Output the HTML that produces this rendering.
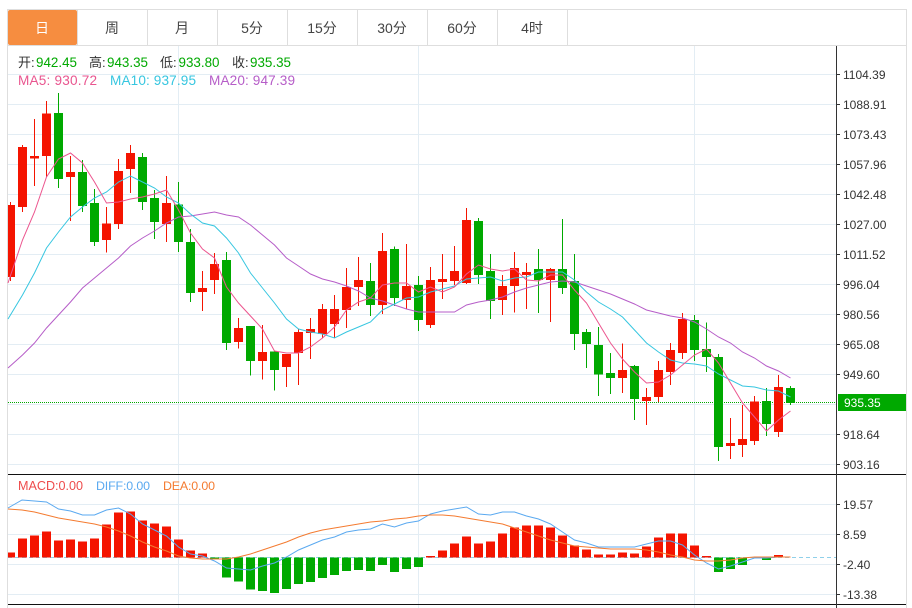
<!DOCTYPE html>
<html><head><meta charset="utf-8"><style>
html,body{margin:0;padding:0;background:#fff;width:912px;height:608px;overflow:hidden}
svg{position:absolute;left:0;top:0}
text{font-family:"Liberation Sans","Noto Sans CJK SC",sans-serif}
.t{font-size:14px;fill:#444;text-anchor:middle}
.a{font-size:12px;fill:#333}
.b{font-size:13px}
</style></head><body>
<svg width="912" height="608" viewBox="0 0 912 608">
<g shape-rendering="crispEdges">
<path d="M8 74.5H836M8 104.5H836M8 134.5H836M8 164.5H836M8 194.5H836M8 224.5H836M8 254.5H836M8 284.5H836M8 314.5H836M8 344.5H836M8 374.5H836M8 404.5H836M8 434.5H836M8 464.5H836M8 504.5H836M8 534.5H836M8 564.5H836M8 594.5H836M178.5 46V608M418.5 46V608M694.5 46V608" stroke="#e3edf4" fill="none"/>
<path d="M7.5 608V9.5H906.5V608M8 45.5H906M77.5 10V45M147.5 10V45M217.5 10V45M287.5 10V45M357.5 10V45M427.5 10V45M497.5 10V45M567.5 10V45" stroke="#dedede" fill="none"/>
</g>
<rect x="8" y="10" width="69" height="35" rx="2" fill="#f68d40"/>
<text class="t" x="42" y="33" style="fill:#fff">日</text>
<text class="t" x="112" y="33">周</text>
<text class="t" x="182" y="33">月</text>
<text class="t" x="252" y="33">5分</text>
<text class="t" x="322" y="33">15分</text>
<text class="t" x="392" y="33">30分</text>
<text class="t" x="462" y="33">60分</text>
<text class="t" x="532" y="33">4时</text>

<g class="b">
<text x="18" y="67" fill="#333" style="font-size:13px">开:</text><text x="36" y="67" fill="#00a900" style="font-size:13.4px" textLength="41">942.45</text>
<text x="89" y="67" fill="#333" style="font-size:13px">高:</text><text x="107" y="67" fill="#00a900" style="font-size:13.4px" textLength="41">943.35</text>
<text x="160" y="67" fill="#333" style="font-size:13px">低:</text><text x="178.5" y="67" fill="#00a900" style="font-size:13.4px" textLength="41">933.80</text>
<text x="232" y="67" fill="#333" style="font-size:13px">收:</text><text x="250" y="67" fill="#00a900" style="font-size:13.4px" textLength="41">935.35</text>
<text x="18" y="85" fill="#e9558f" style="font-size:13.6px" textLength="79">MA5: 930.72</text>
<text x="110" y="85" fill="#36c6e0" style="font-size:13.6px" textLength="86">MA10: 937.95</text>
<text x="209" y="85" fill="#b65dc8" style="font-size:13.6px" textLength="86">MA20: 947.39</text>
<text x="18" y="490" fill="#ee4c4c" style="font-size:12.6px" textLength="65">MACD:0.00</text>
<text x="96" y="490" fill="#5aa9f0" style="font-size:12.4px" textLength="54">DIFF:0.00</text>
<text x="163" y="490" fill="#f47b30" style="font-size:12.4px" textLength="52">DEA:0.00</text>
</g>

<!-- zero + price lines -->
<path d="M8 557.5H836" stroke="#8fd0ea" stroke-dasharray="4 3" fill="none"/>
<path d="M8 402.5H836" stroke="#00a900" stroke-dasharray="1 1" fill="none" shape-rendering="crispEdges"/>

<!-- red wicks -->
<path fill="none" stroke="#f41400" d="M10.5 202V281M22.5 145V212M34.5 119V186M46.5 101V177M70.5 156V221M106.5 207V252.5M118.5 159V229M130.5 145V193M166.5 176V242M202.5 271V311M214.5 253V294M238.5 318V348.5M262.5 325V379.5M286.5 354V387M298.5 329V385M310.5 318V359M322.5 304V338M334.5 295V338M346.5 268V328M358.5 257V306M382.5 233V314M406.5 244V309M430.5 267V328M442.5 254V299M454.5 246V285M466.5 208V284M502.5 275V315M514.5 252V312.5M526.5 263V309M550.5 268V322M622.5 343.5V393M646.5 388V425M658.5 361V402M670.5 343V385M682.5 313V359M730.5 418V459M742.5 405V457M754.5 396V445M778.5 375V437"/>
<!-- red bodies -->
<path fill="#f41400" d="M8 205H15V277H8zM18 147h9V207h-9zM30 156h9V158.5h-9zM42 113.5h9V156h-9zM66 172h9V177h-9zM102 223.5h9V240h-9zM114 171h9V224h-9zM126 153h9V169h-9zM162 203h9V224h-9zM198 288h9V292h-9zM210 264h9V280h-9zM234 328h9V342h-9zM258 352h9V361h-9zM282 354h9V367h-9zM294 332h9V353h-9zM306 329h9V333h-9zM318 309h9V334h-9zM330 309h9V324h-9zM342 287h9V310h-9zM354 280h9V287h-9zM378 251h9V305h-9zM402 286h9V300h-9zM426 280h9V325h-9zM438 279h9V282h-9zM450 271h9V281h-9zM462 220h9V283h-9zM498 286h9V300h-9zM510 268h9V286h-9zM522 272h9V275h-9zM546 269h9V280h-9zM618 370h9V378h-9zM642 397h9V401h-9zM654 370h9V397h-9zM666 350h9V372h-9zM678 319h9V353h-9zM726 443h9V446h-9zM738 439h9V445h-9zM750 401.5h9V441h-9zM774 387h9V432h-9z"/>
<!-- green wicks -->
<path fill="none" stroke="#00a900" d="M58.5 93V188M82.5 160V212M94.5 189V246M142.5 153V210M154.5 190V239M178.5 182V252M190.5 229V302M226.5 252V350M250.5 326V375.5M274.5 351V390.5M370.5 263V316M394.5 246.5V306M418.5 276V331M478.5 218V284M490.5 254V319M538.5 249V313M562.5 219V294M574.5 254V350M586.5 329V368M598.5 327V396M610.5 353V394M634.5 365V420M694.5 315V361M706.5 322.5V372M718.5 354V461M766.5 388V436M790.5 386V405"/>
<!-- green bodies -->
<path fill="#00a900" d="M54 113h9V179h-9zM78 172h9V206h-9zM90 203h9V242h-9zM138 157h9V202h-9zM150 198h9V222h-9zM174 204.5h9V242h-9zM186 242h9V293h-9zM222 260h9V343h-9zM246 326h9V361h-9zM270 351.5h9V370h-9zM366 281h9V305h-9zM390 249h9V298h-9zM414 285h9V320h-9zM474 221h9V275h-9zM486 271h9V301h-9zM534 269h9V280h-9zM558 269h9V288h-9zM570 281h9V334h-9zM582 332h9V344h-9zM594 345h9V374.5h-9zM606 373h9V378h-9zM630 366h9V399h-9zM690 320h9V350h-9zM702 349h9V357h-9zM714 357h9V447h-9zM762 401h9V424h-9zM786 388h9V403h-9z"/>

<!-- MA20 -->
<polyline fill="none" stroke="#b65dc8" points="8,368 22.5,355 34.5,343 46.5,328 58.5,315 70.5,302 82.5,288 94.5,278 106.5,268 118.5,258 130.5,246 142.5,238 154.5,231 166.5,223 178.5,217 190.5,216 202.5,214 214.5,212 226.5,215 238.5,217 250.5,225 262.5,235 274.5,245 286.5,258 298.5,266 310.5,274 322.5,279 334.5,282 346.5,286 358.5,291 370.5,298 382.5,301 394.5,305 406.5,309 418.5,312 430.5,312 442.5,312 454.5,312 466.5,305 478.5,302 490.5,300 502.5,297 514.5,292 526.5,288 538.5,285 550.5,282 562.5,281 574.5,282 586.5,286 598.5,290 610.5,294 622.5,299 634.5,304 646.5,310 658.5,313 670.5,316 682.5,318 694.5,322 706.5,329 718.5,337 730.5,343 742.5,352 754.5,358 766.5,366 778.5,371 790.5,378"/>
<!-- MA10 -->
<polyline fill="none" stroke="#36c6e0" points="8,319 22.5,295 34.5,273 46.5,248 58.5,232 70.5,217 82.5,207 94.5,198 106.5,192 118.5,182 130.5,176 142.5,182 154.5,188 166.5,197 178.5,203 190.5,214 202.5,223 214.5,226 226.5,238 238.5,253 250.5,273 262.5,288 274.5,303 286.5,319 298.5,329 310.5,332 322.5,334 334.5,338 346.5,332 358.5,327 370.5,322 382.5,310 394.5,304 406.5,298 418.5,297 430.5,292 442.5,289 454.5,286 466.5,279 478.5,278 490.5,277 502.5,281 514.5,278 526.5,277 538.5,272 550.5,272 562.5,272 574.5,280 586.5,292 598.5,302 610.5,309 622.5,317 634.5,330 646.5,343 658.5,352 670.5,360 682.5,363 694.5,364 706.5,366 718.5,374 730.5,380 742.5,386 754.5,387 766.5,390 778.5,391 790.5,397"/>
<!-- MA5 -->
<polyline fill="none" stroke="#ec558e" points="8,283 22.5,240 34.5,212 46.5,177 58.5,159 70.5,153 82.5,163 94.5,182 106.5,203 118.5,202 130.5,199 142.5,197 154.5,194 166.5,190 178.5,210 190.5,233 202.5,249 214.5,258 226.5,287 238.5,303 250.5,316 262.5,329 274.5,351 286.5,353 298.5,353 310.5,347 322.5,338 334.5,327 346.5,310 358.5,302 370.5,298 382.5,285 394.5,283 406.5,283 418.5,292 430.5,287 442.5,292 454.5,287 466.5,274 478.5,265 490.5,269 502.5,271 514.5,269 526.5,280 538.5,281 550.5,275 562.5,275 574.5,290 586.5,303 598.5,323 610.5,343 622.5,359 634.5,372 646.5,383 658.5,382 670.5,375 682.5,365 694.5,355 706.5,349 718.5,363 730.5,383 742.5,403 754.5,417 766.5,431 778.5,420 790.5,411"/>

<!-- MACD red bars -->
<path fill="#f41400" d="M8 552.5H15V557.5H8zM18 538.5h9V557.5h-9zM30 535.5h9V557.5h-9zM42 531.5h9V557.5h-9zM54 540.5h9V557.5h-9zM66 539.5h9V557.5h-9zM78 541.5h9V557.5h-9zM90 538.5h9V557.5h-9zM102 524.5h9V557.5h-9zM114 512.5h9V557.5h-9zM126 511.5h9V557.5h-9zM138 520.5h9V557.5h-9zM150 523.5h9V557.5h-9zM162 526.5h9V557.5h-9zM174 539.5h9V557.5h-9zM186 550.5h9V557.5h-9zM198 553.5h9V557.5h-9zM426 556h9V557.5h-9zM438 550.5h9V557.5h-9zM450 543.5h9V557.5h-9zM462 536.5h9V557.5h-9zM474 543.5h9V557.5h-9zM486 541.5h9V557.5h-9zM498 533.5h9V557.5h-9zM510 527.5h9V557.5h-9zM522 525.5h9V557.5h-9zM534 525.5h9V557.5h-9zM546 527.5h9V557.5h-9zM558 535.5h9V557.5h-9zM570 545.5h9V557.5h-9zM582 549.5h9V557.5h-9zM594 554.5h9V557.5h-9zM606 554.5h9V557.5h-9zM618 552.5h9V557.5h-9zM630 553.5h9V557.5h-9zM642 546.5h9V557.5h-9zM654 537.5h9V557.5h-9zM666 533.5h9V557.5h-9zM678 533.5h9V557.5h-9zM690 545.5h9V557.5h-9zM702 556h9V557.5h-9zM774 555h9V557.5h-9z"/>
<!-- MACD green bars -->
<path fill="#00a900" d="M210 557.5h9V559h-9zM222 557.5h9V577.5h-9zM234 557.5h9V581.5h-9zM246 557.5h9V589.5h-9zM258 557.5h9V591h-9zM270 557.5h9V593h-9zM282 557.5h9V589h-9zM294 557.5h9V584h-9zM306 557.5h9V582h-9zM318 557.5h9V578h-9zM330 557.5h9V575h-9zM342 557.5h9V571h-9zM354 557.5h9V570h-9zM366 557.5h9V571h-9zM378 557.5h9V565h-9zM390 557.5h9V572h-9zM402 557.5h9V569h-9zM414 557.5h9V567h-9zM714 557.5h9V572h-9zM726 557.5h9V569h-9zM738 557.5h9V565h-9zM762 557.5h9V560h-9z"/>

<!-- DIFF -->
<polyline fill="none" stroke="#5aa9f0" points="8,508 22,500 34.5,501 46.5,502 58.5,509 70.5,511 82.5,515 94.5,515 106.5,510 118.5,508 130.5,514 142.5,524 154.5,530 166.5,536 178.5,547 190.5,554 202.5,556 214.5,561 226.5,568 238.5,569 250.5,570 262.5,566 274.5,563 286.5,557 298.5,550 310.5,545 322.5,540 334.5,537 346.5,532 358.5,530 370.5,529 382.5,524 394.5,527 406.5,523 418.5,521 430.5,514 442.5,511 454.5,509 466.5,507 478.5,514 490.5,515 502.5,512 514.5,512 526.5,516 538.5,519 550.5,524 562.5,532 574.5,540 586.5,543 598.5,547 610.5,547 622.5,547 634.5,547 646.5,544 658.5,541 670.5,541 682.5,545 694.5,555 706.5,563 718.5,569 730.5,566 742.5,562 754.5,558 766.5,558 778.5,557 790.5,557"/>
<!-- DEA -->
<polyline fill="none" stroke="#f47b30" points="8,509 22,510 34.5,512 46.5,515 58.5,518 70.5,520 82.5,522 94.5,524 106.5,527 118.5,531 130.5,536 142.5,542 154.5,547 166.5,551 178.5,556 190.5,558 202.5,559 214.5,559 226.5,559 238.5,557 250.5,554 262.5,550 274.5,546 286.5,542 298.5,537 310.5,533 322.5,530 334.5,528 346.5,526 358.5,524 370.5,522 382.5,521 394.5,519 406.5,518 418.5,516 430.5,515 442.5,515 454.5,516 466.5,518 478.5,520 490.5,522 502.5,524 514.5,528 526.5,532 538.5,536 550.5,540 562.5,543 574.5,546 586.5,547 598.5,548 610.5,549 622.5,549 634.5,549 646.5,550 658.5,552 670.5,555 682.5,557 694.5,560 706.5,561 718.5,561 730.5,560 742.5,558 754.5,557 766.5,557 778.5,557 790.5,557"/>

<!-- axes -->
<g shape-rendering="crispEdges">
<path d="M8 474.5H906M8 604.5H906" stroke="#111" fill="none"/>
<path d="M836.5 46V608" stroke="#333" fill="none"/>
<path d="M837 74.5H840M837 104.5H840M837 134.5H840M837 164.5H840M837 194.5H840M837 224.5H840M837 254.5H840M837 284.5H840M837 314.5H840M837 344.5H840M837 374.5H840M837 434.5H840M837 464.5H840M837 504.5H840M837 534.5H840M837 564.5H840M837 594.5H840" stroke="#333" fill="none"/>
<rect x="838" y="394" width="68" height="17" fill="#00a900"/>
</g>
<text x="844" y="407" style="font-size:12px" fill="#fff">935.35</text>
<g>
<text class="a" x="843" y="79">1104.39</text>
<text class="a" x="843" y="109">1088.91</text>
<text class="a" x="843" y="139">1073.43</text>
<text class="a" x="843" y="169">1057.96</text>
<text class="a" x="843" y="199">1042.48</text>
<text class="a" x="843" y="229">1027.00</text>
<text class="a" x="843" y="259">1011.52</text>
<text class="a" x="843" y="289">996.04</text>
<text class="a" x="843" y="319">980.56</text>
<text class="a" x="843" y="349">965.08</text>
<text class="a" x="843" y="379">949.60</text>
<text class="a" x="843" y="439">918.64</text>
<text class="a" x="843" y="469">903.16</text>
<text class="a" x="843" y="509">19.57</text>
<text class="a" x="843" y="539">8.59</text>
<text class="a" x="843" y="569">-2.40</text>
<text class="a" x="843" y="599">-13.38</text>
</g>
</svg>
</body></html>
